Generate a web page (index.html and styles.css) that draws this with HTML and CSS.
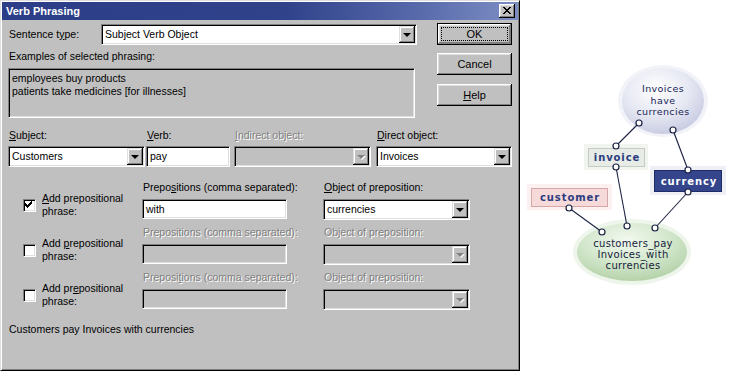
FILE: index.html
```html
<html>

<head>
    <title>Verb Phrasing</title>
    <link rel="stylesheet" href="styles.css">
</head>

<body>

    <div class="page">
        <div class="dialog">
            <div class="titlebar">
                <span class="title">Verb Phrasing</span>
                <span class="close-btn">
                    <svg width="8" height="7" viewBox="0 0 8 7" shape-rendering="crispEdges">
                        <path d="M0 0h2v1h-2zM6 0h2v1h-2zM1 1h2v1h-2zM5 1h2v1h-2zM2 2h4v1h-4zM3 3h2v1h-2zM2 4h4v1h-4zM1 5h2v1h-2zM5 5h2v1h-2zM0 6h2v1h-2zM6 6h2v1h-2z" fill="#000"/>
                    </svg>
                </span>
            </div>

            <div class="content">
                <div class="top">
                    <div class="top-left">
                        <div class="sentence-row">
                            <label class="sentence-label">Sentence t<u>y</u>pe:</label>
                            <div class="combo sentence-combo">
                                <span class="combo-text">Subject Verb Object</span>
                                <span class="arrow"></span>
                            </div>
                        </div>
                        <div class="examples-label">Examples of selected phrasing:</div>
                        <div class="examples-box">
                            employees buy products<br>
                            patients take medicines [for illnesses]
                        </div>
                    </div>
                    <div class="buttons">
                        <div class="btn btn-default"><span class="focus">OK</span></div>
                        <div class="btn btn-cancel">Cancel</div>
                        <div class="btn btn-help"><u>H</u>elp</div>
                    </div>
                </div>

                <div class="objects">
                    <div class="field f-subject">
                        <label><u>S</u>ubject:</label>
                        <div class="combo">
                            <span class="combo-text">Customers</span>
                            <span class="arrow"></span>
                        </div>
                    </div>
                    <div class="field f-verb">
                        <label><u>V</u>erb:</label>
                        <div class="edit">pay</div>
                    </div>
                    <div class="field f-indirect">
                        <label class="disabled"><u>I</u>ndirect object:</label>
                        <div class="combo off">
                            <span class="combo-text"></span>
                            <span class="arrow"></span>
                        </div>
                    </div>
                    <div class="field f-direct">
                        <label><u>D</u>irect object:</label>
                        <div class="combo">
                            <span class="combo-text">Invoices</span>
                            <span class="arrow"></span>
                        </div>
                    </div>
                </div>

                <div class="prep-row first">
                    <div class="prep-check">
                        <span class="checkbox">
                            <svg width="11" height="11" viewBox="0 0 11 11" shape-rendering="crispEdges">
                                <path d="M7 1h1v1h-1zM6 2h2v1h-2zM1 3h1v1h-1zM5 3h3v1h-3zM1 4h2v1h-2zM4 4h3v1h-3zM1 5h5v1h-5zM2 6h3v1h-3zM3 7h1v1h-1z" fill="#000"/>
                            </svg>
                        </span>
                        <span class="check-text"><u>A</u>dd prepositional<br>phrase:</span>
                    </div>
                    <div class="prep-col">
                        <label>Prepo<u>s</u>itions (comma separated):</label>
                        <div class="edit">with</div>
                    </div>
                    <div class="obj-col">
                        <label><u>O</u>bject of preposition:</label>
                        <div class="combo">
                            <span class="combo-text">currencies</span>
                            <span class="arrow"></span>
                        </div>
                    </div>
                </div>

                <div class="prep-row">
                    <div class="prep-check">
                        <span class="checkbox"></span>
                        <span class="check-text">Add <u>p</u>repositional<br>phrase:</span>
                    </div>
                    <div class="prep-col">
                        <label class="disabled">Prepositions (comma separated):</label>
                        <div class="edit off"></div>
                    </div>
                    <div class="obj-col">
                        <label class="disabled">Object of preposition:</label>
                        <div class="combo off">
                            <span class="combo-text"></span>
                            <span class="arrow"></span>
                        </div>
                    </div>
                </div>

                <div class="prep-row">
                    <div class="prep-check">
                        <span class="checkbox"></span>
                        <span class="check-text">Add pr<u>e</u>positional<br>phrase:</span>
                    </div>
                    <div class="prep-col">
                        <label class="disabled">Preposi<u>t</u>ions (comma separated):</label>
                        <div class="edit off"></div>
                    </div>
                    <div class="obj-col">
                        <label class="disabled">Object of preposition:</label>
                        <div class="combo off">
                            <span class="combo-text"></span>
                            <span class="arrow"></span>
                        </div>
                    </div>
                </div>

                <div class="summary">Customers pay Invoices with currencies</div>
            </div>
        </div>

        <div class="diagram">
            <svg width="212" height="371" viewBox="520 0 212 371">
                <defs>
                    <radialGradient id="topFill" cx="0.42" cy="0.32" r="0.72">
                        <stop offset="0" stop-color="#ffffff"/>
                        <stop offset="0.55" stop-color="#e6e8f3"/>
                        <stop offset="1" stop-color="#c6c9e0"/>
                    </radialGradient>
                    <radialGradient id="botFill" cx="0.45" cy="0.3" r="0.72">
                        <stop offset="0" stop-color="#f3f9f0"/>
                        <stop offset="0.55" stop-color="#d3e7cc"/>
                        <stop offset="1" stop-color="#b3d1a8"/>
                    </radialGradient>
                </defs>

                <!-- phrase bubbles -->
                <ellipse cx="663" cy="101" rx="45" ry="36" fill="#f2f3f9"/>
                <ellipse cx="663" cy="101" rx="41" ry="33" fill="url(#topFill)"/>
                <ellipse cx="632" cy="252" rx="59" ry="33" fill="#eef5eb"/>
                <ellipse cx="632" cy="252" rx="55" ry="29" fill="url(#botFill)"/>

                <!-- object boxes -->
                <rect x="584" y="144" width="64" height="26" fill="#f2f4f0"/>
                <rect x="588.5" y="148.5" width="56" height="18" fill="#e7ece6" stroke="#c4ccc3"/>
                <rect x="650" y="166" width="76" height="29" fill="#eef0f5"/>
                <rect x="654.5" y="170.5" width="67" height="21" fill="#34458c" stroke="#1f2b68"/>
                <rect x="527" y="184" width="85" height="26" fill="#fcf1f0"/>
                <rect x="531.5" y="188.5" width="76" height="18" fill="#f6dada" stroke="#d5a7a7"/>

                <!-- links -->
                <g stroke="#1b2142" stroke-width="1.1">
                    <line x1="639" y1="123" x2="616" y2="146"/>
                    <line x1="673" y1="130" x2="688" y2="170"/>
                    <line x1="616" y1="167" x2="627" y2="226"/>
                    <line x1="688" y1="192" x2="655" y2="228"/>
                    <line x1="569" y1="208" x2="602" y2="232"/>
                </g>
                <g fill="#fff" stroke="#1b2142" stroke-width="1.2">
                    <circle cx="639" cy="123" r="3"/>
                    <circle cx="616" cy="146" r="3"/>
                    <circle cx="673" cy="130" r="3"/>
                    <circle cx="688" cy="170" r="3"/>
                    <circle cx="616" cy="167" r="3"/>
                    <circle cx="627" cy="226" r="3"/>
                    <circle cx="688" cy="192" r="3"/>
                    <circle cx="655" cy="228" r="3"/>
                    <circle cx="569" cy="208" r="3"/>
                    <circle cx="602" cy="232" r="3"/>
                </g>

                <g class="bubble-text" fill="#172456" text-anchor="middle">
                    <text x="663" y="92">Invoices</text>
                    <text x="663" y="104">have</text>
                    <text x="663" y="115">currencies</text>
                </g>
                <g class="bubble-text big" fill="#161d3c" text-anchor="middle">
                    <text x="633" y="247">customers_pay</text>
                    <text x="633" y="258">Invoices_with</text>
                    <text x="633" y="269">currencies</text>
                </g>
                <g class="box-text" text-anchor="middle">
                    <text x="617" y="161" fill="#2b3c7e">invoice</text>
                    <text x="689" y="185" fill="#ffffff">currency</text>
                    <text x="570" y="201" fill="#2b3c7e">customer</text>
                </g>
            </svg>
        </div>
    </div>

</body>

</html>
```

FILE: styles.css
```css
body {
    margin: 0;
    font-family: "Liberation Sans", Arial, sans-serif;
    font-size: 10.5px;
    line-height: 13px;
    color: #000;
    background: #fff;
}

.page {
    display: flex;
    width: 732px;
    height: 371px;
}

/* window frame */

.dialog {
    box-sizing: border-box;
    width: 520px;
    height: 371px;
    padding: 1px;
    background: #c0c0c0;
    border: 1px solid;
    border-color: #dfdfdf #000 #000 #dfdfdf;
    box-shadow: inset 1px 1px #fff, inset -1px -1px #808080;
}

.titlebar {
    display: flex;
    align-items: center;
    height: 18px;
    padding: 0 3px 0 4px;
    background: linear-gradient(90deg, #2c3e88 0%, #30428a 55%, #5a6cac 82%, #7d8ec4 100%);
}

.title {
    color: #fff;
    font-size: 11px;
    font-weight: bold;
}

.close-btn {
    box-sizing: border-box;
    display: flex;
    align-items: center;
    justify-content: center;
    width: 16px;
    height: 14px;
    margin-left: auto;
    background: #c0c0c0;
    box-shadow: inset -1px -1px #000, inset 1px 1px #fff, inset -2px -2px #808080, inset 2px 2px #dfdfdf;
}

.close-btn svg {
    display: block;
    margin: 0 1px 1px 0;
}

.content {
    padding: 3px 6px 0 6px;
}

/* top part */

.top {
    display: flex;
}

.top-left {
    width: 409px;
}

.sentence-row {
    display: flex;
    align-items: center;
    margin-top: 1px;
}

.sentence-label {
    width: 92px;
    padding-left: 1px;
}

.sentence-combo {
    width: 316px;
}

.examples-label {
    margin-top: 5px;
    padding-left: 1px;
}

.examples-box {
    box-sizing: border-box;
    width: 407px;
    height: 50px;
    margin-top: 5px;
    padding: 3px 3px 0 3px;
    border: 1px solid;
    border-color: #808080 #fff #fff #808080;
    box-shadow: inset 1px 1px #000, inset -1px -1px #dfdfdf;
}

.buttons {
    margin-left: 20px;
}

.btn {
    box-sizing: border-box;
    display: flex;
    align-items: center;
    justify-content: center;
    width: 75px;
    height: 22px;
    font-size: 11px;
    background: #c0c0c0;
    box-shadow: inset -1px -1px #000, inset 1px 1px #fff, inset -2px -2px #808080, inset 2px 2px #dfdfdf;
}

.btn-default {
    padding: 3px;
    border: 1px solid #000;
    box-shadow: inset -1px -1px #808080, inset 1px 1px #fff, inset -2px -2px #808080, inset 2px 2px #dfdfdf;
}

.focus {
    box-sizing: border-box;
    display: flex;
    align-items: center;
    justify-content: center;
    width: 100%;
    height: 100%;
    border: 1px dotted #000;
}

.btn-cancel {
    margin-top: 8px;
}

.btn-help {
    margin-top: 9px;
}

/* controls */

.combo {
    box-sizing: border-box;
    display: flex;
    align-items: center;
    height: 21px;
    padding: 1px;
    background: #fff;
    border: 1px solid;
    border-color: #808080 #fff #fff #808080;
    box-shadow: inset 1px 1px #000, inset -1px -1px #dfdfdf;
}

.combo-text {
    flex: 1;
    padding-left: 2px;
    white-space: nowrap;
}

.arrow {
    box-sizing: border-box;
    display: flex;
    align-items: center;
    justify-content: center;
    width: 16px;
    height: 17px;
    background: #c0c0c0;
    box-shadow: inset -1px -1px #000, inset 1px 1px #dfdfdf, inset -2px -2px #808080, inset 2px 2px #fff;
}

.arrow::after {
    content: "";
    width: 0;
    height: 0;
    margin: 1px 1px 0 0;
    border-left: 4px solid transparent;
    border-right: 4px solid transparent;
    border-top: 4px solid #000;
}

.combo.off {
    background: #c0c0c0;
}

.combo.off .arrow::after {
    border-top-color: #808080;
    filter: drop-shadow(1px 1px 0 #fff);
}

.edit {
    box-sizing: border-box;
    height: 20px;
    padding: 3px 0 0 3px;
    background: #fff;
    border: 1px solid;
    border-color: #808080 #fff #fff #808080;
    box-shadow: inset 1px 1px #000, inset -1px -1px #dfdfdf;
}

.edit.off {
    background: #c0c0c0;
}

.disabled {
    color: #808080;
    text-shadow: 1px 1px 0 #fff;
}

label {
    display: block;
    padding-left: 1px;
    white-space: nowrap;
}

/* object row */

.objects {
    display: flex;
    margin-top: 11px;
}

.field .combo,
.field .edit {
    margin-top: 4px;
}

.field .edit {
    height: 21px;
}

.f-subject {
    width: 137px;
}

.f-verb {
    width: 84px;
    margin-left: 1px;
}

.f-indirect {
    width: 137px;
    margin-left: 4px;
}

.f-direct {
    width: 136px;
    margin-left: 5px;
}

/* prepositional phrases */

.prep-row {
    display: flex;
    margin-top: 6px;
}

.prep-row.first {
    margin-top: 14px;
}

.prep-check {
    display: flex;
    align-items: center;
    width: 119px;
    height: 26px;
    margin-top: 11px;
    padding-left: 15px;
}

.checkbox {
    box-sizing: border-box;
    flex-shrink: 0;
    width: 13px;
    height: 13px;
    background: #fff;
    border: 1px solid;
    border-color: #808080 #fff #fff #808080;
    box-shadow: inset 1px 1px #000, inset -1px -1px #dfdfdf;
}

.checkbox svg {
    display: block;
}

.check-text {
    margin-left: 6px;
    white-space: nowrap;
}

.prep-col {
    width: 145px;
}

.obj-col {
    width: 147px;
    margin-left: 36px;
}

.prep-col .edit,
.obj-col .combo {
    margin-top: 5px;
}

.summary {
    margin-top: 13px;
    padding-left: 1px;
}

/* diagram */

.diagram {
    flex: 1;
    background: #fff;
}

.diagram svg {
    display: block;
}

.bubble-text {
    font-family: "DejaVu Sans", Verdana, sans-serif;
    font-size: 9.5px;
    letter-spacing: 0.4px;
}

.bubble-text.big {
    font-size: 10px;
    letter-spacing: 0.3px;
}

.box-text {
    font-family: "DejaVu Sans", Verdana, sans-serif;
    font-size: 10px;
    font-weight: bold;
    letter-spacing: 0.9px;
}
```
